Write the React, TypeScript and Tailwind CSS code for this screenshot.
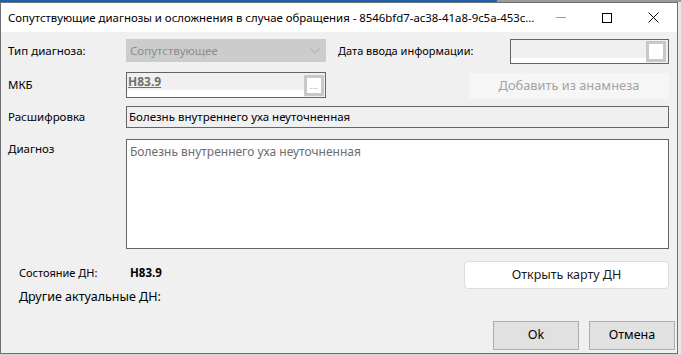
import React from 'react';

const font = { fontFamily: '"Noto Sans", "Open Sans", sans-serif' };

function Chevron() {
  return (
    <svg width="10" height="6" viewBox="0 0 10 6" className="shrink-0">
      <polyline points="0.5,0.5 5,5 9.5,0.5" fill="none" stroke="#a8a8a8" strokeWidth="1" />
    </svg>
  );
}

function SmallButton({ dots }: { dots?: boolean }) {
  return (
    <div className="w-[20px] h-[21px] shrink-0 border-[3px] border-[#c8c8c8] bg-white flex items-end justify-center pb-[3px]">
      {dots && <span className="text-[8px] leading-none text-[#8a8a8a] tracking-[0.5px]">...</span>}
    </div>
  );
}

export default function App() {
  return (
    <div className="w-[681px] h-[356px] bg-[#d4d4d4] overflow-hidden text-black" style={font}>
      {/* background behind the dialog */}
      <div className="flex h-[2px]">
        <div className="w-[497px] bg-[#1b62b3]" />
        <div className="flex-1 bg-[#9a9a9a]" />
      </div>

      <div className="flex">
        <div className="w-[678px] h-[352px] border border-[#6f6f6f] flex flex-col">
          {/* title bar */}
          <div className="h-[29px] bg-white flex items-center shrink-0">
            <div className="pl-[7px] text-[11.4px] flex-1 whitespace-nowrap overflow-hidden">
              Сопутствующие диагнозы и осложнения в случае обращения - 8546bfd7-ac38-41a8-9c5a-453c...
            </div>
            <div className="flex items-center h-full">
              <div className="w-[46px] flex justify-center">
                <div className="w-[10px] h-[1px] bg-[#9a9a9a]" />
              </div>
              <div className="w-[46px] flex justify-center">
                <div className="w-[10px] h-[10px] border border-black" />
              </div>
              <div className="w-[46px] flex justify-center mr-[1px]">
                <svg width="11" height="11" viewBox="0 0 11 11">
                  <path d="M0.5 0.5 L10.5 10.5 M10.5 0.5 L0.5 10.5" stroke="#000" strokeWidth="1" />
                </svg>
              </div>
            </div>
          </div>

          {/* body */}
          <div className="flex-1 bg-[#f0f0f0] flex flex-col pl-[7px] text-[11.5px]">
            {/* row 1 */}
            <div className="flex items-start mt-[7px] h-[25px]">
              <div className="w-[118px] h-[23px] flex items-center">Тип диагноза:</div>
              <div className="w-[200px] h-[23px] bg-[#cccccc] flex items-center pl-[4px] pr-[6px] text-[#8c8c8c]">
                <span className="flex-1">Сопутствующее</span>
                <Chevron />
              </div>
              <div className="w-[184px] h-[25px] flex items-center pl-[12px] text-[11px]">Дата ввода информации:</div>
              <div className="w-[159px] h-[25px] border border-[#646464] flex items-center pr-[2px]">
                <div className="flex-1 h-full flex flex-col">
                  <div className="h-[18px] bg-[#f0f0f0]" />
                  <div className="flex-1 bg-white" />
                </div>
                <SmallButton />
              </div>
            </div>

            {/* row 2 */}
            <div className="flex items-start mt-[8px] h-[27px]">
              <div className="w-[118px] h-[26px] flex items-center">МКБ</div>
              <div className="w-[200px] h-[26px] border border-[#646464] flex items-center pr-[1px]">
                <div className="flex-1 h-full flex flex-col">
                  <div className="h-[17px] bg-[#f0f0f0] pl-[1px] flex items-center font-bold underline text-[#707070] text-[12px] leading-none">
                    H83.9
                  </div>
                  <div className="flex-1 bg-white" />
                </div>
                <SmallButton dots />
              </div>
              <div className="w-[143px]" />
              <div className="w-[200px] h-[26px] mt-[1px] rounded-[3px] bg-[#f6f6f6] flex items-center justify-center text-[12.8px] text-[#a3a3a3]">
                Добавить из анамнеза
              </div>
            </div>

            {/* row 3 */}
            <div className="flex items-center mt-[7px]">
              <div className="w-[118px]">Расшифровка</div>
              <div className="w-[543px] h-[22px] border border-[#646464] bg-[#f0f0f0] flex items-center pl-[2px] text-[11.5px]">
                Болезнь внутреннего уха неуточненная
              </div>
            </div>

            {/* row 4 */}
            <div className="flex items-start mt-[11px]">
              <div className="w-[118px] pt-[1px]">Диагноз</div>
              <div className="w-[543px] h-[110px] border border-[#646464] bg-white pl-[3px] pt-[3px] text-[#6d6d6d] text-[12px]">
                Болезнь внутреннего уха неуточненная
              </div>
            </div>

            {/* ДН section */}
            <div className="flex items-start mt-[12px]">
              <div className="flex-1 flex flex-col pl-[11px]">
                <div className="flex items-center h-[20px] mt-[2px] text-[11px]">
                  <span className="w-[111px]">Состояние ДН:</span>
                  <span className="font-bold text-[11.5px]">H83.9</span>
                </div>
                <div className="h-[20px] mt-[4px] flex items-center text-[12.5px]">Другие актуальные ДН:</div>
              </div>
              <div className="w-[205px] h-[28px] mr-[8px] rounded-[4px] border border-[#dcdcdc] bg-white flex items-center justify-center text-[12.5px] text-[#1a1a1a]">
                Открыть карту ДН
              </div>
            </div>

            {/* dialog buttons */}
            <div className="flex justify-end gap-[10px] mt-auto mb-[3px] pr-[2px] text-[12.5px]">
              <div className="w-[86px] h-[29px] bg-[#e1e1e1] border border-[#adadad] flex items-center justify-center">Ok</div>
              <div className="w-[86px] h-[29px] bg-[#e1e1e1] border border-[#adadad] flex items-center justify-center">Отмена</div>
            </div>
          </div>
        </div>
        <div className="flex-1 h-[352px] bg-[#e8e8e8]" />
      </div>
    </div>
  );
}
